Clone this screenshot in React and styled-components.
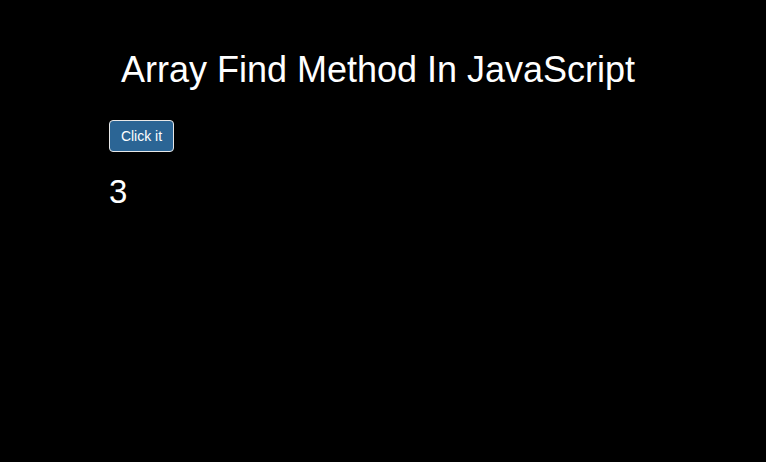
import React, { useState } from 'react';
import styled, { createGlobalStyle } from 'styled-components';

const GlobalStyle = createGlobalStyle`
  html, body {
    margin: 0;
    padding: 0;
    background: #000;
  }
  body {
    font-family: "Liberation Sans", Arial, sans-serif;
    color: #fff;
  }
`

const Page = styled.div`
  width: 766px;
  height: 462px;
  background: #000;
  padding: 50px 0 0 109px;
  box-sizing: border-box;
`

const Title = styled.h1`
  margin: 0 0 30px -109px;
  width: 756px;
  text-align: center;
  font-size: 36px;
  font-weight: normal;
  line-height: 40px;
`

const Button = styled.button`
  display: block;
  width: 65px;
  height: 32px;
  padding: 0;
  background: #2b6595;
  color: #fff;
  border: 1px solid #e8e8e8;
  border-radius: 4px;
  font-family: "Liberation Sans", Arial, sans-serif;
  font-size: 14px;
  cursor: pointer;
`

const Result = styled.div`
  margin-top: 20px;
  font-size: 33px;
  line-height: 40px;
`

const numbers = [1, 3, 5, 7, 9];

function App() {
  const [found, setFound] = useState(3);
  return (
    <Page>
      <GlobalStyle />
      <Title>Array Find Method In JavaScript</Title>
      <Button onClick={() => setFound(numbers.find((n) => n > 1))}>Click it</Button>
      <Result>{found}</Result>
    </Page>
  );
}

export default App;
